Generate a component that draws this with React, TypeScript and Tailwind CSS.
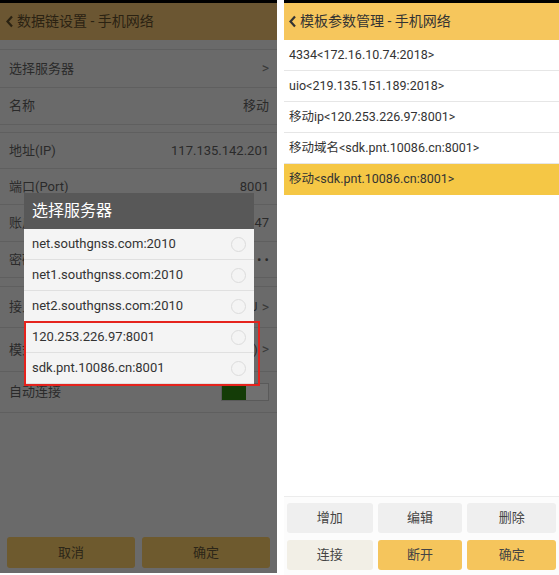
import { ReactNode } from "react";

const font = "font-['Roboto','Noto_Sans_CJK_SC',sans-serif]";

function Back({ color }: { color: string }) {
  return (
    <svg width="9" height="13" viewBox="0 0 9 13" className="shrink-0">
      <polyline points="7,1.5 2.5,6.5 7,11.5" fill="none" stroke={color} strokeWidth="2.2" />
    </svg>
  );
}

function DimRow({ label, value, chevron, h, children }: { label: string; value?: string; chevron?: boolean; h: string; children?: ReactNode }) {
  return (
    <div className={`${h} flex items-center justify-between pl-[9px] pr-[8px] border-b border-[#5f5f5f] text-[13px] text-[#2a2a2a]`}>
      <span>{label}</span>
      <span className="flex items-center gap-[4px]">
        {value && <span>{value}</span>}
        {chevron && <span className="text-[#3a3a3a] text-[14px]">&gt;</span>}
        {children}
      </span>
    </div>
  );
}

const servers = [
  "net.southgnss.com:2010",
  "net1.southgnss.com:2010",
  "net2.southgnss.com:2010",
  "120.253.226.97:8001",
  "sdk.pnt.10086.cn:8001",
];

const templates = [
  "4334<172.16.10.74:2018>",
  "uio<219.135.151.189:2018>",
  "移动ip<120.253.226.97:8001>",
  "移动域名<sdk.pnt.10086.cn:8001>",
];

function LeftPanel() {
  return (
    <div className="relative w-[277px] h-[573px] bg-[#6a6a6a] flex flex-col">
      <div className="h-[3px] bg-black" />
      <div className="h-[37px] bg-[#6b5632] flex items-center pl-[5px] gap-[3px] text-[14px] text-[#2a2212]">
        <Back color="#2a2212" />
        <span>数据链设置 - 手机网络</span>
      </div>
      <div className="h-[10px] border-b border-[#5f5f5f]" />
      <DimRow label="选择服务器" chevron h="h-[38px]" />
      <DimRow label="名称" value="移动" h="h-[37px]" />
      <div className="h-[8px] border-b border-[#5f5f5f]" />
      <DimRow label="地址(IP)" value="117.135.142.201" h="h-[36px]" />
      <DimRow label="端口(Port)" value="8001" h="h-[36px]" />
      <DimRow label="账户" value="47" h="h-[37px]" />
      <DimRow label="密码" value="• •" h="h-[36px]" />
      <div className="h-[9px] border-b border-[#5f5f5f]" />
      <DimRow label="接入点" value="J" chevron h="h-[41px]" />
      <DimRow label="模式" value=")" chevron h="h-[44px]" />
      <DimRow label="自动连接" h="h-[41px]">
        <span className="flex w-[48px] h-[18px] border border-[#5a5a5a]">
          <span className="w-[24px] bg-[#143c07]" />
          <span className="flex-1 bg-[#707070]" />
        </span>
      </DimRow>
      <div className="flex-1" />
      <div className="flex gap-[7px] px-[7px] pb-[5px]">
        <div className="flex-1 h-[31px] rounded-[3px] bg-[#6e5a2e] flex items-center justify-center text-[13px] text-[#2c2618]">取消</div>
        <div className="flex-1 h-[31px] rounded-[3px] bg-[#6e5a2e] flex items-center justify-center text-[13px] text-[#2c2618]">确定</div>
      </div>

      <div className="absolute left-[24px] top-[193px] w-[230px]">
        <div className="h-[36px] bg-[#585858] flex items-center pl-[8px] text-[16px] text-white">选择服务器</div>
        {servers.map((s) => (
          <div key={s} className="h-[31px] bg-[#f4f4f4] border-b border-[#e0e0e0] flex items-center justify-between pl-[8px] pr-[8px] text-[13px] text-[#333]">
            <span>{s}</span>
            <span className="w-[15px] h-[15px] rounded-full border border-[#dcdcdc]" />
          </div>
        ))}
      </div>
      <div className="absolute left-[24px] top-[321px] w-[236px] h-[65px] border-2 border-[#e5231d]" />
    </div>
  );
}

function RightPanel() {
  return (
    <div className="w-[275px] h-[575px] bg-white flex flex-col">
      <div className="h-[3px] bg-black" />
      <div className="h-[37px] bg-[#f6c65c] flex items-center pl-[4px] gap-[3px] text-[14px] text-[#333]">
        <Back color="#333" />
        <span>模板参数管理 - 手机网络</span>
      </div>
      {templates.map((t) => (
        <div key={t} className="h-[31px] flex items-center pl-[5px] border-b border-[#e6e6e6] text-[12.5px] text-[#333]">{t}</div>
      ))}
      <div className="h-[31px] flex items-center pl-[5px] bg-[#f5c745] text-[12.5px] text-[#333]">移动&lt;sdk.pnt.10086.cn:8001&gt;</div>
      <div className="flex-1 border-b border-[#ececec]" />
      <div className="bg-[#fcfcfc] flex flex-col gap-[7px] px-[3px] pt-[6px] pb-[5px]">
        <div className="flex gap-[5px]">
          <div className="w-[86px] h-[30px] rounded-[3px] bg-[#efefef] flex items-center justify-center text-[13px] text-[#444]">增加</div>
          <div className="w-[85px] h-[30px] rounded-[3px] bg-[#efefef] flex items-center justify-center text-[13px] text-[#444]">编辑</div>
          <div className="w-[89px] h-[30px] rounded-[3px] bg-[#efefef] flex items-center justify-center text-[13px] text-[#444]">删除</div>
        </div>
        <div className="flex gap-[5px]">
          <div className="w-[86px] h-[30px] rounded-[3px] bg-[#f2efe6] flex items-center justify-center text-[13px] text-[#444]">连接</div>
          <div className="w-[85px] h-[30px] rounded-[3px] bg-[#f5c55c] flex items-center justify-center text-[13px] text-[#444]">断开</div>
          <div className="w-[89px] h-[30px] rounded-[3px] bg-[#f5c55c] flex items-center justify-center text-[13px] text-[#444]">确定</div>
        </div>
      </div>
    </div>
  );
}

export default function App() {
  return (
    <div className={`w-[559px] h-[575px] bg-white flex gap-[7px] overflow-hidden ${font}`}>
      <LeftPanel />
      <RightPanel />
    </div>
  );
}
